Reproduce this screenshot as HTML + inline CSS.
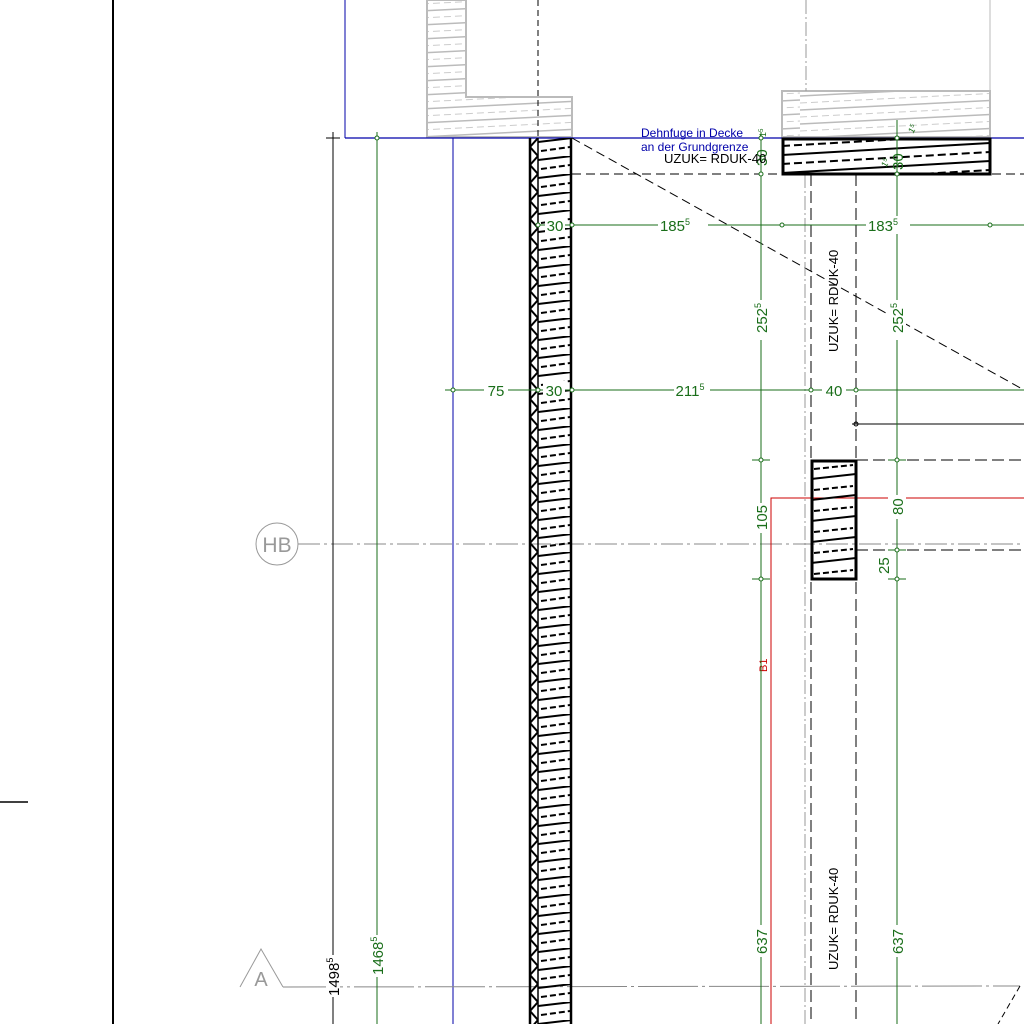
<!DOCTYPE html>
<html><head><style>html,body{margin:0;padding:0;background:#fff;width:1024px;height:1024px;overflow:hidden}</style></head>
<body>
<svg width="1024" height="1024" viewBox="0 0 1024 1024" xmlns="http://www.w3.org/2000/svg" font-family="Liberation Sans, sans-serif">
<defs>
<pattern id="wh" x="538" y="138" width="34" height="18" patternUnits="userSpaceOnUse">
<line x1="0" y1="4" x2="34" y2="0" stroke="#000" stroke-width="2"/>
<line x1="3" y1="13" x2="32" y2="9" stroke="#000" stroke-width="2" stroke-dasharray="6,3"/>
</pattern>
<pattern id="zz" x="529" y="138" width="9" height="18" patternUnits="userSpaceOnUse">
<polyline points="9,0 1,9 9,18" fill="none" stroke="#000" stroke-width="2"/>
</pattern>
<pattern id="ch" x="811" y="460" width="45" height="21" patternUnits="userSpaceOnUse">
<line x1="0" y1="19" x2="45" y2="14" stroke="#000" stroke-width="2"/>
<line x1="3" y1="9" x2="42" y2="5" stroke="#000" stroke-width="2" stroke-dasharray="6,3"/>
</pattern>
<pattern id="bh" x="782" y="138" width="208" height="18" patternUnits="userSpaceOnUse">
<line x1="0" y1="17" x2="208" y2="5" stroke="#000" stroke-width="2"/>
<line x1="0" y1="8" x2="208" y2="-4" stroke="#000" stroke-width="2" stroke-dasharray="8,4"/>
<line x1="0" y1="26" x2="208" y2="14" stroke="#000" stroke-width="2" stroke-dasharray="8,4"/>
</pattern>
<pattern id="gh" x="0" y="0" width="200" height="14" patternUnits="userSpaceOnUse">
<line x1="0" y1="12" x2="200" y2="2" stroke="#bbb" stroke-width="1.5"/>
<line x1="0" y1="19" x2="200" y2="9" stroke="#ccc" stroke-width="1" stroke-dasharray="7,4"/>
<line x1="0" y1="5" x2="200" y2="-5" stroke="#ccc" stroke-width="1" stroke-dasharray="7,4"/>
</pattern>
</defs>

<!-- left frame -->
<line x1="113" y1="0" x2="113" y2="1024" stroke="#000" stroke-width="2"/>
<line x1="0" y1="802" x2="28" y2="802" stroke="#000" stroke-width="1.5"/>

<!-- gray upper structures -->
<path d="M427,0 L466,0 L466,97 L572,97 L572,137 L427,137 Z" fill="url(#gh)" stroke="#bbb" stroke-width="2"/>
<rect x="782" y="91" width="208" height="46" fill="url(#gh)" stroke="#bbb" stroke-width="2"/>
<line x1="538" y1="0" x2="538" y2="138" stroke="#000" stroke-dasharray="6,4"/>
<line x1="806" y1="0" x2="806" y2="91" stroke="#999" stroke-dasharray="14,3,2,3"/>
<line x1="990" y1="0" x2="990" y2="91" stroke="#bbb"/>

<!-- blue lines -->
<line x1="345" y1="0" x2="345" y2="138" stroke="#00a" stroke-width="1"/>
<line x1="345" y1="138" x2="1024" y2="138" stroke="#00a" stroke-width="1.2"/>
<line x1="453" y1="138" x2="453" y2="1024" stroke="#00a" stroke-width="1"/>

<!-- dashed lines -->
<line x1="572" y1="174" x2="1024" y2="174" stroke="#000" stroke-dasharray="9,5"/>
<line x1="572" y1="138" x2="1024" y2="390" stroke="#000" stroke-dasharray="9,5"/>
<line x1="811" y1="174" x2="811" y2="1024" stroke="#000" stroke-dasharray="12,5"/>
<line x1="856" y1="174" x2="856" y2="1024" stroke="#000" stroke-dasharray="12,5"/>
<line x1="805" y1="174" x2="805" y2="1024" stroke="#999" stroke-dasharray="14,3,2,3"/>
<line x1="856" y1="460" x2="1024" y2="460" stroke="#000" stroke-dasharray="12,5"/>
<line x1="856" y1="550" x2="1024" y2="550" stroke="#000" stroke-dasharray="12,5"/>
<line x1="852" y1="424" x2="1024" y2="424" stroke="#000"/>
<circle cx="856" cy="424" r="2" fill="none" stroke="#000"/>

<!-- axes -->
<line x1="298" y1="544" x2="1024" y2="544" stroke="#888" stroke-dasharray="22,4,3,4"/>
<circle cx="277" cy="544" r="21" fill="#fff" stroke="#999"/>
<text x="277" y="552" font-size="21" fill="#999" text-anchor="middle">HB</text>
<path d="M240,987 L261,949 L283,987" fill="none" stroke="#999"/>
<text x="261" y="986" font-size="20" fill="#999" text-anchor="middle">A</text>
<line x1="283" y1="987" x2="1020" y2="986" stroke="#888" stroke-dasharray="60,4,3,4"/>
<line x1="1020" y1="986" x2="998" y2="1024" stroke="#000" stroke-dasharray="6,4"/>

<!-- red -->
<path d="M1024,498 L771,498 L771,1024" fill="none" stroke="#c00" stroke-width="1"/>
<text transform="translate(767,672) rotate(-90)" font-size="11" fill="#c00">B1</text>

<!-- wall -->
<rect x="529" y="138" width="9" height="890" fill="url(#zz)"/>
<rect x="538" y="138" width="34" height="890" fill="url(#wh)"/>
<line x1="530" y1="138" x2="530" y2="1024" stroke="#000" stroke-width="2.5"/>
<line x1="538" y1="138" x2="538" y2="1024" stroke="#000" stroke-width="1.5"/>
<line x1="571" y1="138" x2="571" y2="1024" stroke="#000" stroke-width="2.5"/>

<!-- beam & column -->
<rect x="783" y="139" width="207" height="35" fill="url(#bh)" stroke="#000" stroke-width="3"/>
<rect x="812" y="461" width="44" height="118" fill="url(#ch)" stroke="#000" stroke-width="3"/>

<!-- black dimension 1498 -->
<line x1="333" y1="132" x2="333" y2="1024" stroke="#000"/>
<line x1="326" y1="138" x2="340" y2="138" stroke="#000"/>
<rect x="326" y="955" width="14" height="42" fill="#fff"/>
<text transform="translate(339,996) rotate(-90)" font-size="15" fill="#000">1498<tspan font-size="9" dy="-6">5</tspan></text>

<g stroke="#1a6e1a" fill="none">
<line x1="377" y1="132" x2="377" y2="1024"/>
<line x1="761" y1="132" x2="761" y2="1024"/>
<line x1="897" y1="120" x2="897" y2="1024"/>
<line x1="538" y1="225" x2="1024" y2="225"/>
<line x1="445" y1="390" x2="1024" y2="390"/>
<line x1="752" y1="460" x2="770" y2="460"/><line x1="752" y1="579" x2="770" y2="579"/>
<line x1="888" y1="460" x2="906" y2="460"/><line x1="888" y1="550" x2="906" y2="550"/><line x1="888" y1="579" x2="906" y2="579"/>
</g>
<g fill="#fff" stroke="#1a6e1a">
<circle cx="377" cy="138" r="2"/><circle cx="761" cy="138" r="2"/><circle cx="761" cy="174" r="2"/>
<circle cx="761" cy="460" r="2"/><circle cx="761" cy="579" r="2"/>
<circle cx="897" cy="138" r="2"/><circle cx="897" cy="174" r="2"/><circle cx="897" cy="460" r="2"/><circle cx="897" cy="550" r="2"/><circle cx="897" cy="579" r="2"/>
<circle cx="538" cy="225" r="2"/><circle cx="572" cy="225" r="2"/><circle cx="782" cy="225" r="2"/><circle cx="990" cy="225" r="2"/>
<circle cx="453" cy="390" r="2"/><circle cx="538" cy="390" r="2"/><circle cx="572" cy="390" r="2"/><circle cx="811" cy="390" r="2"/><circle cx="856" cy="390" r="2"/>
</g>
<g fill="#fff">
<rect x="545" y="216" width="20" height="18"/><rect x="658" y="216" width="50" height="18"/><rect x="866" y="216" width="44" height="18"/>
<rect x="484" y="381" width="24" height="18"/><rect x="543" y="381" width="22" height="18"/><rect x="674" y="381" width="36" height="18"/><rect x="822" y="381" width="24" height="18"/>
<rect x="752" y="300" width="18" height="40"/><rect x="888" y="300" width="18" height="40"/>
<rect x="752" y="503" width="18" height="30"/><rect x="888" y="495" width="18" height="24"/><rect x="874" y="553" width="18" height="24"/>
<rect x="752" y="925" width="18" height="32"/><rect x="888" y="925" width="18" height="32"/>
<rect x="368" y="935" width="18" height="42"/>
</g>
<g fill="#1a6e1a" font-size="15">
<text x="555" y="231" text-anchor="middle">30</text>
<text x="675" y="231" text-anchor="middle">185<tspan font-size="9" dy="-6">5</tspan></text>
<text x="883" y="231" text-anchor="middle">183<tspan font-size="9" dy="-6">5</tspan></text>
<text x="496" y="396" text-anchor="middle">75</text>
<text x="554" y="396" text-anchor="middle">30</text>
<text x="690" y="396" text-anchor="middle">211<tspan font-size="9" dy="-6">5</tspan></text>
<text x="834" y="396" text-anchor="middle">40</text>
<text transform="translate(767,166) rotate(-90)">30</text>
<text transform="translate(903,170) rotate(-90)">30</text>
<text transform="translate(767,333) rotate(-90)">252<tspan font-size="9" dy="-6">5</tspan></text>
<text transform="translate(903,333) rotate(-90)">252<tspan font-size="9" dy="-6">5</tspan></text>
<text transform="translate(767,530) rotate(-90)">105</text>
<text transform="translate(903,515) rotate(-90)">80</text>
<text transform="translate(889,574) rotate(-90)">25</text>
<text transform="translate(767,954) rotate(-90)">637</text>
<text transform="translate(903,954) rotate(-90)">637</text>
<text transform="translate(383,975) rotate(-90)">1468<tspan font-size="9" dy="-6">5</tspan></text>
<text transform="translate(766,137) rotate(-90)" font-size="9">1<tspan font-size="6" dy="-3">5</tspan></text>
<text transform="translate(913,134) rotate(-60)" font-size="9">1<tspan font-size="6" dy="-3">5</tspan></text>
<text transform="translate(886,168) rotate(-60)" font-size="9">1<tspan font-size="6" dy="-3">5</tspan></text>
</g>

<!-- notes -->
<text x="641" y="137" font-size="12" fill="#00a">Dehnfuge in Decke</text>
<text x="641" y="151" font-size="12" fill="#00a">an der Grundgrenze</text>
<text x="664" y="163" font-size="13" fill="#000">UZUK= RDUK-40</text>
<text transform="translate(838,352) rotate(-90)" font-size="13" fill="#000">UZUK= RDUK-40</text>
<text transform="translate(838,970) rotate(-90)" font-size="13" fill="#000">UZUK= RDUK-40</text>
</svg>
</body></html>
